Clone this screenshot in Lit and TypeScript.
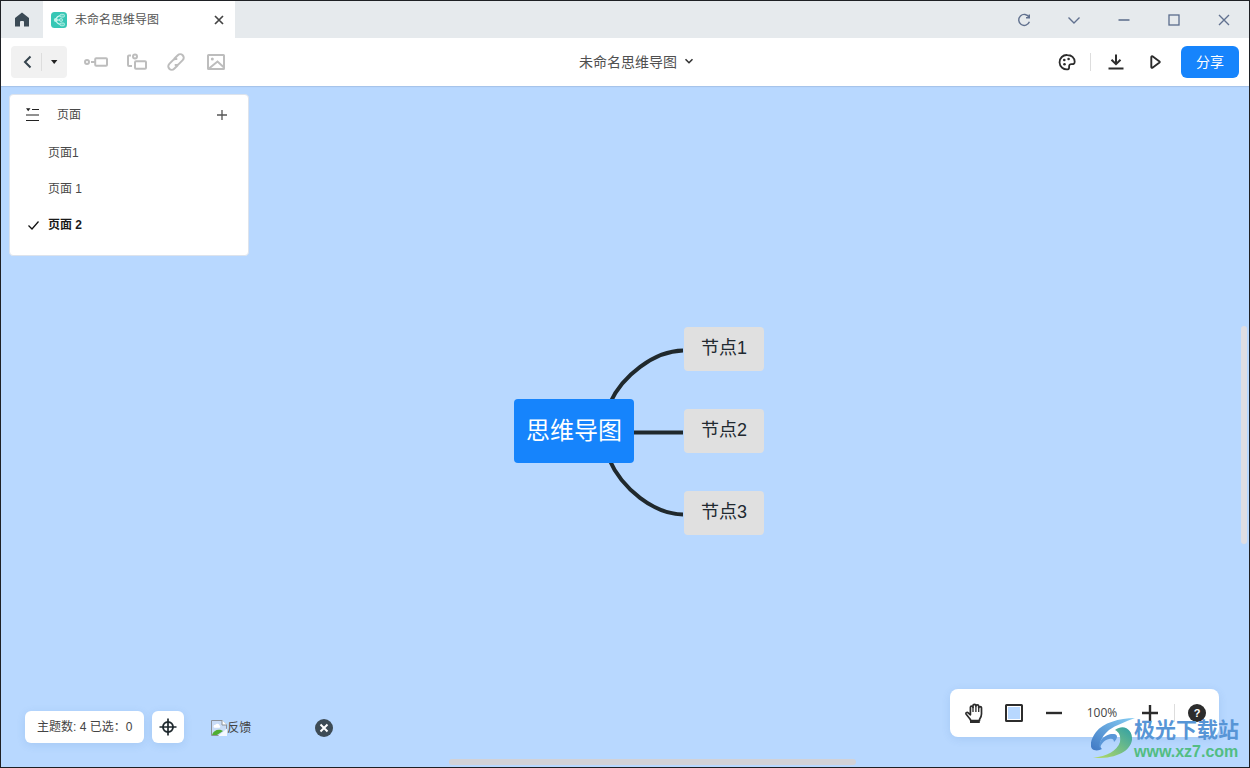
import { LitElement, html, css, svg } from "lit";
import { customElement, property, state } from "lit/decorators.js";
import { classMap } from "lit/directives/class-map.js";

const icons = {
  home: svg`<path d="M5 18.500V10l7-5.500L19 10v8.500h-5v-4.500a1 1 0 0 0-1-1h-2a1 1 0 0 0-1 1v4.500z" fill="#3c4b56"/>`,
  back: svg`<path d="M14.500 6.500 9 12l5.500 5.500" stroke="#35434d" stroke-width="2" fill="none"/>`,
  caret: svg`<path d="M9 10h6.400l-3.200 4z" fill="#222"/>`,
  topic: svg`<g fill="none" stroke="#bdbdbd" stroke-width="2"><circle cx="3" cy="12" r="2"/><path d="M7 12h4"/><rect x="11.200" y="8.200" width="11.800" height="7.600" rx="1"/></g>`,
  subtopic: svg`<g fill="none" stroke="#bdbdbd" stroke-width="2"><path d="M7 5.500H5a1 1 0 0 0-1 1V15a1 1 0 0 0 1 1h3"/><circle cx="11" cy="6.500" r="2"/><rect x="11" y="11.300" width="11" height="7.500" rx="1"/></g>`,
  link: svg`<g fill="none" stroke="#bdbdbd" stroke-width="2" stroke-linecap="round"><path d="M10.500 8.500l3.300-3.300a3.400 3.400 0 0 1 4.900 4.900l-4 4a3.400 3.400 0 0 1-3.200.9"/><path d="M13.500 15.500l-3.300 3.300a3.400 3.400 0 0 1-4.900-4.900l4-4a3.400 3.400 0 0 1 3.200-.9"/></g>`,
  image: svg`<g fill="none" stroke="#bdbdbd" stroke-width="2"><rect x="4" y="5" width="16" height="14" rx=".5"/><path d="M5 18.500l8.500-7 6.500 6"/></g><circle cx="8.300" cy="9" r="1.500" fill="#bdbdbd"/>`,
  chevron: svg`<path d="M8.500 9.200l3.500 3.500 3.500-3.500" fill="none" stroke="#333" stroke-width="1.600"/>`,
  palette: svg`<path d="M12.300 5a7.200 7.200 0 1 0 .5 14.300c1.700-.2 1.300-1.700 1.300-2.900 0-1.700.9-2.400 2.500-2.300 1.600.1 3.100.1 3.100-2.300C19.700 7.900 16.500 5 12.300 5z" fill="none" stroke="#2c2c2c" stroke-width="1.800"/><g fill="#2c2c2c"><circle cx="9.300" cy="10" r="1.300"/><circle cx="13.600" cy="9" r="1.300"/><circle cx="9.500" cy="14.300" r="1.300"/></g>`,
  download: svg`<path d="M12 4.500V14M7.500 9.700l4.500 4.500 4.500-4.500M4.500 18.500h15" fill="none" stroke="#2c2c2c" stroke-width="2"/>`,
  play: svg`<path d="M8.300 7v10.200a.8.800 0 0 0 1.200.6l7-5.200a.7.700 0 0 0 0-1.100l-7-5.200a.8.800 0 0 0-1.200.7z" fill="none" stroke="#2c2c2c" stroke-width="1.900"/>`,
  refresh: svg`<path d="M17 9.200a5.500 5.500 0 1 0 .4 4.600M17.300 6.500v3.200H14" fill="none" stroke="#61718f" stroke-width="1.400"/>`,
  winChevron: svg`<path d="M6.500 9.500 12 15l5.500-5.500" fill="none" stroke="#61718f" stroke-width="1.400"/>`,
  minimize: svg`<path d="M6.500 12h11" stroke="#61718f" stroke-width="1.600"/>`,
  maximize: svg`<rect x="7" y="7" width="10" height="10" fill="none" stroke="#5b6c8c" stroke-width="1.300"/>`,
  close: svg`<path d="M7 7l10 10M17 7 7 17" stroke="#61718f" stroke-width="1.400"/>`,
  tabClose: svg`<path d="M8 8l8 8M16 8l-8 8" stroke="#444" stroke-width="1.700"/>`,
  outline: svg`<path d="M12 6.500h7M6 12h13M6 17.500h13" stroke="#222" stroke-width="1.200"/><path d="M6 5.200h4.500L8.200 8.200z" fill="#222"/>`,
  plusThin: svg`<path d="M12 7v10M7 12h10" stroke="#555" stroke-width="1.300"/>`,
  check: svg`<path d="M4.500 12.500l3.500 3.500 6.500-7.500" fill="none" stroke="#111" stroke-width="1.300"/>`,
  locate: svg`<g fill="none" stroke="#1f292e"><circle cx="12" cy="12" r="5" stroke-width="1.900"/><path d="M12 3.500v17M3.500 12h17" stroke-width="1.700"/></g>`,
  hand: svg`<path d="M8 18 4.200 13.300c-1-1.300.8-2.600 2-1.500l2.200 2V6.300c0-1.600 2.600-1.600 2.600 0V4.700c0-1.700 2.900-1.700 2.900 0v.3c0-1.600 2.800-1.600 2.800 0v1.700c0-1.400 2.800-1.400 2.800 0V13c0 2.500-.8 3.800-2 5.500v1H8.800z" fill="#fff" stroke="#2c2c2c" stroke-width="1.700" stroke-linejoin="round"/><path d="M11 6v5M13.900 5v6M16.700 6.500V11" stroke="#2c2c2c" stroke-width="1.300"/><path d="M8 20.800h9.800" stroke="#2c2c2c" stroke-width="2.400"/>`,
  background: svg`<rect x="4" y="4" width="16" height="16" rx=".5" fill="#fff" stroke="#2c2c2c" stroke-width="2"/><rect x="6" y="6" width="12" height="12" fill="#b8d8ff"/>`,
  minus: svg`<path d="M4 12h16" stroke="#2c2c2c" stroke-width="2.400"/>`,
  plus: svg`<path d="M12 4v16M4 12h16" stroke="#2c2c2c" stroke-width="2.400"/>`,
  dismiss: svg`<circle cx="12" cy="12" r="9" fill="#3d4b55"/><path d="M8.500 8.500l7 7M15.500 8.500l-7 7" stroke="#fff" stroke-width="2"/>`,
  broken: svg`<path d="M4.500 4.500h10.500l4.500 4.500v10.500h-15z" fill="#c9dcf7" stroke="#8d9299"/><path d="M15 4v5h5" fill="#fff" stroke="#8d9299"/><path d="M6.500 10.500a1.800 1.800 0 0 1 2-1.800 2.200 2.200 0 0 1 4 .7 1.300 1.300 0 0 1 0 2.400h-5a1.300 1.300 0 0 1-1-1.300z" fill="#fff"/><path d="M5 19c1-4 5-6 9-5l2 1-6 4z" fill="#4fae32"/><path d="M11 20 20 12.500V20z" fill="#f4f8ff"/>`,
};

@customElement("ui-icon")
export class UiIcon extends LitElement {
  static styles = css`
    :host { display: block; width: 24px; height: 24px; flex: none; }
    .glyph { display: block; width: 100%; height: 100%; }
  `;
  @property() name: keyof typeof icons = "home";
  render() {
    return html`<svg class="glyph" viewBox="0 0 24 24" aria-hidden="true">${icons[this.name]}</svg>`;
  }
}

@customElement("page-panel")
export class PagePanel extends LitElement {
  static styles = css`
    :host {
      display: block;
      box-sizing: border-box;
      padding-bottom: 12px;
      background: #fff;
      border: 1px solid #dde3ec;
      border-radius: 4px;
      font: 12px/16px "Liberation Sans", "Noto Sans CJK SC", sans-serif;
      color: #484848;
    }
    button { font: inherit; color: inherit; border: 0; background: none; padding: 0; cursor: pointer; }
    .head { display: flex; align-items: center; height: 40px; padding: 0 14px 0 10px; }
    .title { flex: 1; margin: 0 0 0 13px; font-size: 12px; font-weight: 400; }
    .list { list-style: none; margin: 0; padding: 0; }
    .row { display: flex; align-items: center; width: 100%; height: 36px; padding-left: 14px; text-align: left; }
    .mark { width: 24px; height: 24px; }
    .current { font-weight: 700; color: #1a1a1a; }
  `;
  @property({ type: Array }) pages: string[] = [];
  @state() private selected = 2;
  render() {
    return html`
      <div class="head">
        <ui-icon name="outline"></ui-icon>
        <h2 class="title">页面</h2>
        <button aria-label="添加页面"><ui-icon name="plusThin"></ui-icon></button>
      </div>
      <ul class="list">
        ${this.pages.map(
          (p, i) => html`<li>
            <button class=${classMap({ row: true, current: i === this.selected })} @click=${() => (this.selected = i)}>
              <span class="mark">${i === this.selected ? html`<ui-icon name="check"></ui-icon>` : ""}</span>${p}
            </button>
          </li>`
        )}
      </ul>
    `;
  }
}

@customElement("mind-map")
export class MindMap extends LitElement {
  static styles = css`
    :host { display: block; width: 250px; height: 208px; font-family: "Liberation Sans", "Noto Sans CJK SC", sans-serif; }
    .links { position: absolute; left: 0; top: 0; width: 250px; height: 208px; }
    .node { position: absolute; display: flex; align-items: center; justify-content: center; border-radius: 4px; box-sizing: border-box; }
    .root { left: 0; top: 72px; width: 120px; height: 64px; background: #1684fc; color: #fff; font-size: 24px; line-height: 32px; }
    .leaf { left: 170px; width: 80px; height: 44px; padding-bottom: 2px; background: #e0e0e0; color: #212930; font-size: 18px; line-height: 24px; }
    .first { top: 0; }
    .second { top: 82px; }
    .third { top: 164px; }
  `;
  render() {
    return html`
      <svg class="links" viewBox="0 0 250 208" fill="none" stroke="#20292d" stroke-width="4" aria-hidden="true">
        <path d="M96 76C108 49 140 24 169 23.500" />
        <path d="M110 105.500H169" />
        <path d="M95 132C108 162 140 187 169 187.500" />
      </svg>
      <div class="node root">思维导图</div>
      <div class="node leaf first">节点1</div>
      <div class="node leaf second">节点2</div>
      <div class="node leaf third">节点3</div>
    `;
  }
}

@customElement("app-root")
export class AppRoot extends LitElement {
  static styles = css`
    :host {
      display: flex;
      flex-direction: column;
      box-sizing: border-box;
      height: 100vh;
      border: 1px solid #1e2024;
      overflow: hidden;
      font: 12px/16px "Liberation Sans", "Noto Sans CJK SC", sans-serif;
      color: #444;
    }
    button { display: flex; align-items: center; justify-content: center; font: inherit; color: inherit; border: 0; background: none; padding: 0; cursor: pointer; }
    .titlebar { display: flex; height: 37px; flex: none; background: #e6eaed; }
    .home { width: 42px; }
    .tab { display: flex; align-items: center; width: 192px; box-sizing: border-box; padding: 0 4px 0 8px; background: #fff; }
    .logo { width: 16px; height: 16px; flex: none; }
    .name { flex: 1; margin-left: 8px; color: #555; }
    .window { display: flex; margin-left: auto; }
    .window button { width: 50px; }
    .toolbar { display: grid; grid-template-columns: 1fr auto 1fr; align-items: center; height: 48px; flex: none; padding: 0 10px; background: #fff; }
    .tools { display: flex; align-items: center; gap: 16px; }
    .history { display: flex; align-items: center; box-sizing: border-box; height: 32px; width: 56px; padding-left: 4px; margin-right: 1px; background: #f1f1f1; border-radius: 4px; }
    .history button { width: 24px; flex: 1; }
    .rule { width: 1px; height: 18px; background: #ddd; }
    .doc { padding-left: 22px; font-size: 14px; line-height: 20px; color: #505050; }
    .doc ui-icon { margin-right: -8px; }
    .actions { display: flex; align-items: center; justify-content: flex-end; }
    .actions .rule { margin: 0 13px 0 11px; }
    .play { margin: 0 14px 0 15px; }
    .share { width: 58px; height: 32px; border-radius: 6px; background: #1684fc; color: #fff; font-size: 14px; }
    .canvas { position: relative; flex: 1; min-height: 0; background: #b8d8ff; box-shadow: inset 0 2px 1px -1px #a5c3e8; }
    page-panel { position: absolute; left: 8px; top: 8px; width: 240px; }
    mind-map { position: absolute; left: calc(50% - 111px); top: calc(50% - 100px); }
    .status { position: absolute; left: 24px; bottom: 24px; display: flex; align-items: center; gap: 8px; }
    .card { height: 32px; background: #fff; border-radius: 6px; box-shadow: 0 2px 8px rgba(60, 110, 180, 0.14); }
    .count { display: flex; align-items: center; padding: 0 12px; white-space: pre; }
    .locate { width: 32px; }
    .feedback { display: flex; align-items: center; margin-left: 15px; padding-top: 2px; }
    .feedback button { margin-left: 61px; }
    .feedback a { display: flex; align-items: center; color: inherit; text-decoration: none; }
    .feedback a ui-icon { margin-right: -4px; }
    .zoom { position: absolute; right: 30px; bottom: 30px; display: flex; align-items: center; height: 48px; padding: 0 10px 0 12px; border-radius: 8px; background: #fff; box-shadow: 0 2px 8px rgba(60, 110, 180, 0.14); }
    .zoom button { margin-right: 16px; }
    .zoom .rule { margin-right: 10px; }
    .zoom .in { margin-right: 12px; }
    .zoom .help { width: 24px; margin: 0; }
    .help span { display: grid; place-items: center; width: 18px; height: 18px; border-radius: 50%; background: #2c2c2c; color: #fff; font-size: 11px; font-weight: 700; }
    .level { width: 40px; margin-right: 16px; text-align: center; font-family: "Open Sans", "Noto Sans", sans-serif; }
    .vbar { position: absolute; right: 2px; top: 240px; width: 6px; height: 218px; border-radius: 3px; background: #dedde3; }
    .hbar { position: absolute; left: 448px; bottom: 2px; width: 407px; height: 6px; border-radius: 3px; background: #d2d2d7; }
    .brand { position: absolute; right: 10px; bottom: 5px; display: flex; align-items: center; pointer-events: none; }
    .swoosh { width: 46px; height: 44px; margin-right: -3px; }
    .words { display: flex; flex-direction: column; }
    .cn { font-size: 21px; line-height: 24px; font-weight: 700; color: #5795d6; }
    .url { font-size: 16px; line-height: 20px; font-weight: 700; color: #52bd83; }
  `;

  private winButtons = [
    ["refresh", "刷新"],
    ["winChevron", "更多"],
    ["minimize", "最小化"],
    ["maximize", "最大化"],
    ["close", "关闭"],
  ];
  private tools = [
    ["topic", "同级主题"],
    ["subtopic", "子主题"],
    ["link", "链接"],
    ["image", "图片"],
  ];

  render() {
    return html`
      <header class="titlebar">
        <button class="home" aria-label="首页"><ui-icon name="home"></ui-icon></button>
        <div class="tab">
          <svg class="logo" viewBox="0 0 16 16" aria-hidden="true">
            <rect width="16" height="16" rx="3.500" fill="#37c7b5" />
            <path d="M5 8C5.500 4.500 7.500 3.800 10 3.700M5 8c.5 3.700 2.500 4.300 5 4.400M5 8h4" fill="none" stroke="#d5f8f1" stroke-width="1.200" />
            <circle cx="4.800" cy="8" r="1.900" fill="#c4f3ea" />
            <g fill="#5fd4c5" stroke="#c9f5ee" stroke-width=".8"><rect x="9" y="2.300" width="4.500" height="2.800" rx="1.200" /><rect x="8.500" y="6.600" width="3" height="2.800" rx="1.200" /><rect x="9" y="11" width="4.500" height="2.800" rx="1.200" /></g>
          </svg>
          <span class="name">未命名思维导图</span>
          <button aria-label="关闭标签"><ui-icon name="tabClose"></ui-icon></button>
        </div>
        <div class="window">
          ${this.winButtons.map(([n, l]) => html`<button aria-label=${l}><ui-icon name=${n}></ui-icon></button>`)}
        </div>
      </header>
      <div class="toolbar">
        <div class="tools">
          <div class="history">
            <button aria-label="返回"><ui-icon name="back"></ui-icon></button>
            <span class="rule"></span>
            <button aria-label="展开"><ui-icon name="caret"></ui-icon></button>
          </div>
          ${this.tools.map(([n, l]) => html`<button aria-label=${l}><ui-icon name=${n}></ui-icon></button>`)}
        </div>
        <button class="doc">未命名思维导图<ui-icon name="chevron"></ui-icon></button>
        <div class="actions">
          <button aria-label="主题风格"><ui-icon name="palette"></ui-icon></button>
          <span class="rule"></span>
          <button aria-label="下载"><ui-icon name="download"></ui-icon></button>
          <button class="play" aria-label="播放"><ui-icon name="play"></ui-icon></button>
          <button class="share">分享</button>
        </div>
      </div>
      <main class="canvas">
        <mind-map></mind-map>
        <page-panel .pages=${["页面1", "页面 1", "页面 2"]}></page-panel>
        <div class="vbar"></div>
        <div class="hbar"></div>
        <div class="status">
          <div class="card count">主题数: 4 已选：0</div>
          <button class="card locate" aria-label="定位"><ui-icon name="locate"></ui-icon></button>
          <div class="feedback">
            <a href="#feedback"><ui-icon name="broken"></ui-icon>反馈</a>
            <button aria-label="关闭反馈"><ui-icon name="dismiss"></ui-icon></button>
          </div>
        </div>
        <div class="zoom">
          <button aria-label="拖动画布"><ui-icon name="hand"></ui-icon></button>
          <button aria-label="画布背景"><ui-icon name="background"></ui-icon></button>
          <button aria-label="缩小"><ui-icon name="minus"></ui-icon></button>
          <span class="level">100%</span>
          <button class="in" aria-label="放大"><ui-icon name="plus"></ui-icon></button>
          <span class="rule"></span>
          <button class="help" aria-label="帮助"><span>?</span></button>
        </div>
        <div class="brand">
          <svg class="swoosh" viewBox="0 0 46 44" aria-hidden="true">
            <defs>
              <linearGradient id="sky" x1="0" y1="1" x2="1" y2="0"><stop offset="0" stop-color="#3f78c4" /><stop offset="1" stop-color="#86cdf3" /></linearGradient>
              <linearGradient id="leaf" x1="0" y1="1" x2="1" y2="0"><stop offset="0" stop-color="#b9dc62" /><stop offset="1" stop-color="#2f9fa8" /></linearGradient>
            </defs>
            <path d="M44 0C28 0 12 5 5 14-1 22-2 30 3 32c3 1 6 0 8-1C6 27 11 18 18 12 25 7 34 4 44 0z" fill="url(#sky)" />
            <path d="M9 30C6 23 15 15 23 16c4 .5 4 4 0 8 0-3-2-4-5-3-5 1-8 5-9 9z" fill="#5a97d8" />
            <path d="M24 12C33 5 42 12 41 22 39 34 24 41 2 40c14-2 24-7 27-16 1-6-1-10-5-12z" fill="url(#leaf)" />
          </svg>
          <div class="words"><span class="cn">极光下载站</span><span class="url">www.xz7.com</span></div>
        </div>
      </main>
    `;
  }
}
